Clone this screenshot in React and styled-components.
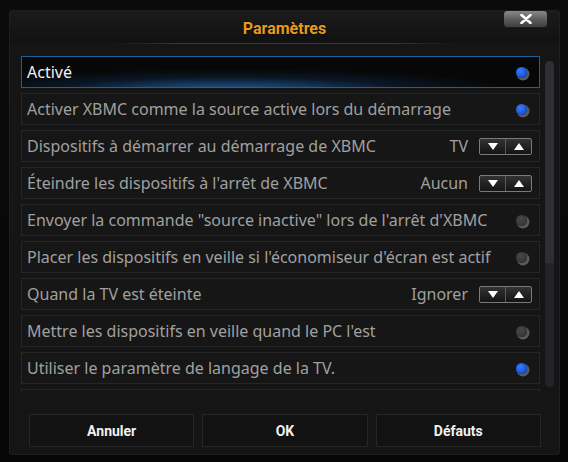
import styled, { createGlobalStyle } from 'styled-components'

const Global = createGlobalStyle`
  html, body { margin: 0; padding: 0; background: #050505; }
  body { width: 568px; height: 462px; overflow: hidden; }
`;

const Frame = styled.div`
  width: 568px;
  height: 462px;
  box-sizing: border-box;
  padding: 10px 8px 7px 9px;
  background: linear-gradient(#0b0b0b, #060606);
`;

const Panel = styled.div`
  height: 100%;
  box-sizing: border-box;
  background: #151515;
  border: 1px solid #1f1f1f;
  border-radius: 3px;
  display: flex;
  flex-direction: column;
`;

const Header = styled.div`
  height: 32px;
  display: grid;
  grid-template-columns: 1fr auto 1fr;
  align-items: start;
  background: linear-gradient(#1b1b1b, #111);
`;

const Title = styled.h1`
  grid-column: 2;
  margin: 8px 0 0;
  font: bold 16px Roboto, "Liberation Sans", sans-serif;
  color: #e59a1c;
  text-shadow: 0 0 2px rgba(0,0,0,.8);
`;

const Close = styled.button`
  grid-column: 3;
  justify-self: end;
  margin: -1px 11px 0 0;
  width: 45px;
  height: 18px;
  padding: 0;
  border: 1px solid #1a1a1a;
  border-radius: 4px;
  background: linear-gradient(#8a8a8a, #5a5a5a 55%, #3e3e3e);
  display: flex;
  align-items: center;
  justify-content: center;
`;

const Rule = styled.div`
  height: 1px;
  margin: 0 103px 0 103px;
  background: linear-gradient(90deg, transparent, #3a3a3a 20%, #3a3a3a 80%, transparent);
`;

const Body = styled.div`
  display: flex;
  gap: 5px;
  padding: 12px 5px 0 11px;
`;

const List = styled.div`
  width: 520px;
  height: 337px;
  overflow: hidden;
  display: flex;
  flex-direction: column;
  gap: 5px;
`;

const Row = styled.div`
  flex: none;
  height: 32px;
  box-sizing: border-box;
  display: flex;
  align-items: center;
  padding: 0 7px 0 5px;
  border: 1px solid ${p => p.$focus ? '#1d5f99' : '#262626'};
  background: ${p => p.$focus
    ? 'radial-gradient(ellipse 55% 70% at 40% 110%, rgba(40,120,200,.75), rgba(20,70,130,.25) 60%, transparent 100%), #070707'
    : '#161616'};
  font: 16px "Noto Sans", "Open Sans", sans-serif;
  color: ${p => p.$focus ? '#f2f2f2' : '#a0a0a0'};
`;

const Label = styled.span`
  flex: 1;
  white-space: nowrap;
`;

const Value = styled.span`
  margin-right: 11px;
`;

const Radio = styled.span`
  width: 11px;
  height: 11px;
  margin-right: 5px;
  border-radius: 50%;
  background: ${p => p.$on
    ? 'radial-gradient(circle at 40% 35%, #3b7cff, #1550d0 70%)'
    : 'radial-gradient(circle at 40% 35%, #474747, #363636 70%)'};
  box-shadow: 1.5px 1.5px 0 1px #5a5a5a;
`;

const Spinner = styled.div`
  display: flex;
  width: 53px;
  height: 17px;
  box-sizing: border-box;
  border: 1px solid #7a7a7a;
  border-radius: 2px;
  background: linear-gradient(#333, #141414);
`;

const SpinHalf = styled.span`
  flex: 1;
  display: flex;
  align-items: center;
  justify-content: center;
  & + & { border-left: 1px solid #5a5a5a; }
`;

const Track = styled.div`
  width: 9px;
  margin: 5px 0 6px;
  border-radius: 5px;
  background: linear-gradient(#2e2f32 0 62%, #232427 62%);
`;

const Buttons = styled.div`
  display: grid;
  grid-template-columns: repeat(3, 1fr);
  gap: 8px;
  margin: 21px 18px 0 19px;
`;

const Button = styled.button`
  height: 33px;
  background: #121212;
  border: 1px solid #262626;
  color: #f0f0f0;
  font: bold 14px Roboto, "Liberation Sans", sans-serif;
`;

const Tri = ({ up }) => (
  <svg width="10" height="7" viewBox="0 0 10 7">
    <path d={up ? 'M0 7 L5 0 L10 7 Z' : 'M0 0 L10 0 L5 7 Z'} fill="#fff" />
  </svg>
);

const rows = [
  { label: 'Activé', radio: true, focus: true },
  { label: 'Activer XBMC comme la source active lors du démarrage', radio: true },
  { label: 'Dispositifs à démarrer au démarrage de XBMC', value: 'TV' },
  { label: "Éteindre les dispositifs à l'arrêt de XBMC", value: 'Aucun' },
  { label: 'Envoyer la commande "source inactive" lors de l\'arrêt d\'XBMC', radio: false },
  { label: "Placer les dispositifs en veille si l'économiseur d'écran est actif", radio: false },
  { label: 'Quand la TV est éteinte', value: 'Ignorer' },
  { label: "Mettre les dispositifs en veille quand le PC l'est", radio: false },
  { label: 'Utiliser le paramètre de langage de la TV.', radio: true },
  { label: '' },
];

export default function App() {
  return (
    <>
      <Global />
      <Frame>
        <Panel>
          <Header>
            <Title>Paramètres</Title>
            <Close>
              <svg width="12" height="10" viewBox="0 0 12 10">
                <path d="M1.5 1 L10.5 9 M10.5 1 L1.5 9" stroke="#fff" strokeWidth="2.6" strokeLinecap="round" />
              </svg>
            </Close>
          </Header>
          <Rule />
          <Body>
            <List>
              {rows.map((r, i) => (
                <Row key={i} $focus={r.focus}>
                  <Label>{r.label}</Label>
                  {r.value && <Value>{r.value}</Value>}
                  {r.value && (
                    <Spinner>
                      <SpinHalf><Tri /></SpinHalf>
                      <SpinHalf><Tri up /></SpinHalf>
                    </Spinner>
                  )}
                  {r.radio !== undefined && <Radio $on={r.radio} />}
                </Row>
              ))}
            </List>
            <Track />
          </Body>
          <Buttons>
            <Button>Annuler</Button>
            <Button>OK</Button>
            <Button>Défauts</Button>
          </Buttons>
        </Panel>
      </Frame>
    </>
  )
}
